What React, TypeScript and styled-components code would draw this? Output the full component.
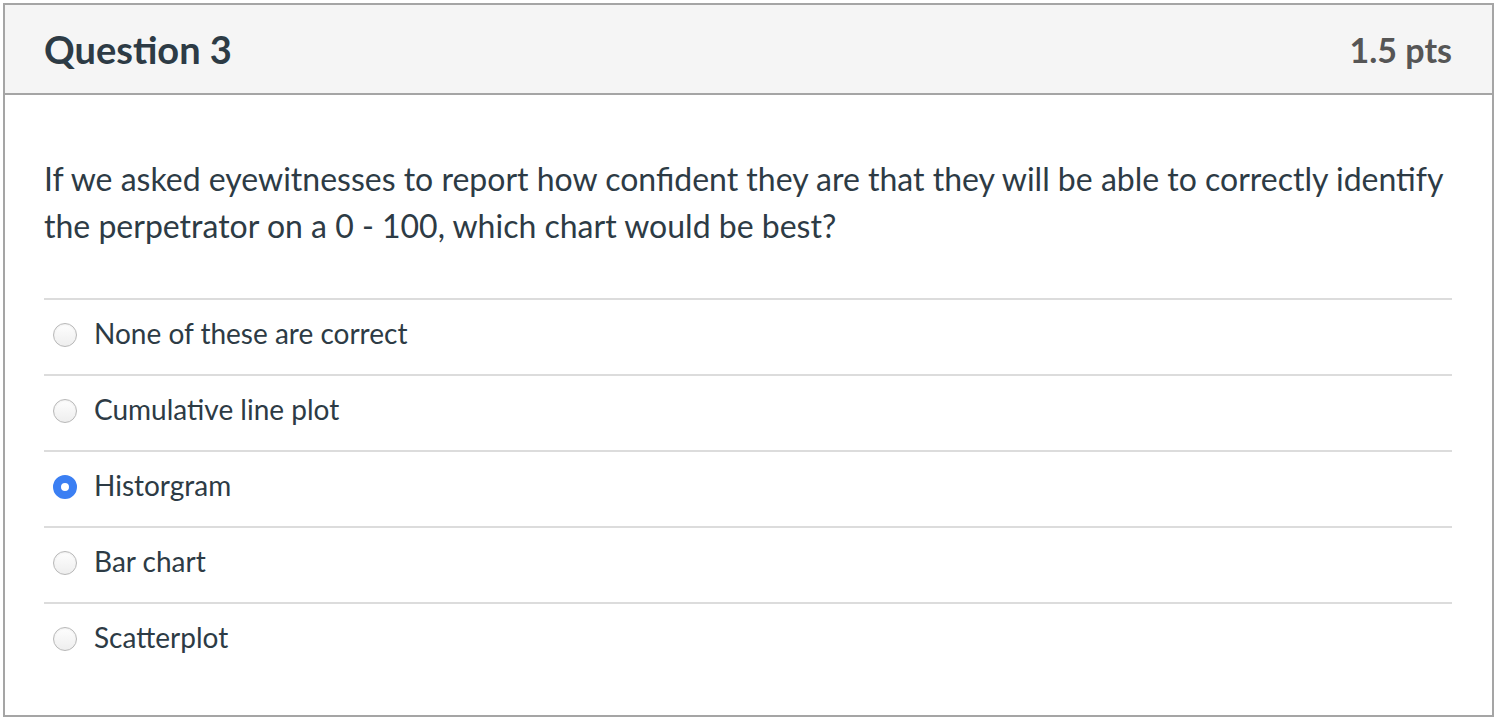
import React from 'react';
import styled, { createGlobalStyle } from 'styled-components';

const GlobalStyle = createGlobalStyle`
  body {
    margin: 0;
    background: #fff;
    font-family: Lato, "Open Sans", "Liberation Sans", sans-serif;
    color: #2d3b45;
  }
`;

const Card = styled.div`
  margin: 3px 2px 0 3px;
  height: 714px;
  border: 2px solid #a5a5a5;
  box-sizing: border-box;
  display: flex;
  flex-direction: column;
`;

const Header = styled.div`
  height: 90px;
  flex-shrink: 0;
  background: #f5f5f5;
  border-bottom: 2px solid #a5a5a5;
  box-sizing: border-box;
  display: flex;
  align-items: center;
  justify-content: space-between;
  padding: 0 40px 0 39px;
`;

const Title = styled.div`
  font-size: 38px;
  font-weight: 700;
  color: #2d3b45;
`;

const Points = styled.div`
  font-size: 34px;
  font-weight: 700;
  color: #565656;
`;

const Body = styled.div`
  padding: 60px 40px 0 39px;
`;

const QuestionText = styled.p`
  margin: 0 0 49px;
  font-size: 32px;
  line-height: 47px;
`;

const Answers = styled.div`
  display: flex;
  flex-direction: column;
`;

const Answer = styled.label`
  height: 76px;
  box-sizing: border-box;
  border-top: 2px solid #dcdcdc;
  display: flex;
  align-items: center;
  gap: 17px;
  padding: 0 0 8px 9px;
  font-size: 28px;
`;

const Radio = styled.span<{ $checked?: boolean }>`
  width: 24px;
  height: 24px;
  border-radius: 50%;
  box-sizing: border-box;
  flex-shrink: 0;
  margin-top: 4px;
  ${({ $checked }) =>
    $checked
      ? `
    background: #fff;
    border: 8px solid #3b7ff3;
  `
      : `
    background: linear-gradient(#fefefe, #eeeeee);
    border: 1px solid #b8b8b8;
    box-shadow: inset 0 1px 2px rgba(0, 0, 0, 0.06);
  `}
`;

const answers = [
  { text: 'None of these are correct' },
  { text: 'Cumulative line plot' },
  { text: 'Historgram', checked: true },
  { text: 'Bar chart' },
  { text: 'Scatterplot' },
];

const App = () => {
  return (
    <>
      <GlobalStyle />
      <Card>
        <Header>
          <Title>Question 3</Title>
          <Points>1.5 pts</Points>
        </Header>
        <Body>
          <QuestionText>
            If we asked eyewitnesses to report how confident they are that they will be able to correctly identify
            the perpetrator on a 0 - 100, which chart would be best?
          </QuestionText>
          <Answers>
            {answers.map((a) => (
              <Answer key={a.text}>
                <Radio $checked={a.checked} />
                {a.text}
              </Answer>
            ))}
          </Answers>
        </Body>
      </Card>
    </>
  );
};

export default App;
